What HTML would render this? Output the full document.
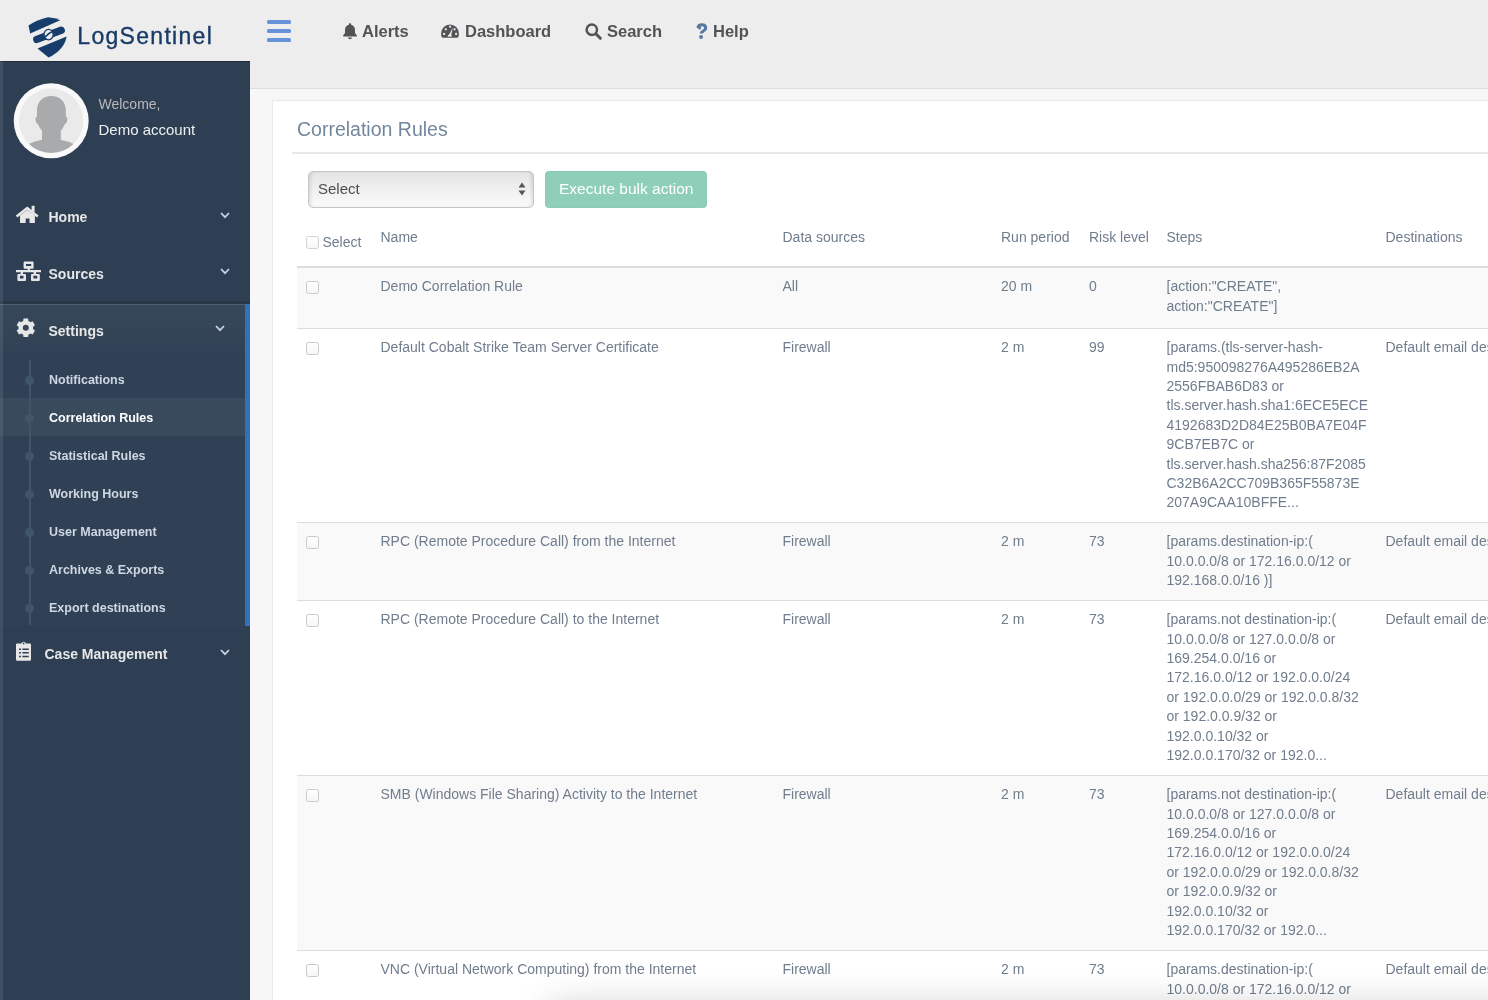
<!DOCTYPE html>
<html><head><meta charset="utf-8"><style>
*{box-sizing:border-box;margin:0;padding:0}
html,body{width:1488px;height:1000px;overflow:hidden}
body{position:relative;background:#F7F7F7;font-family:"Liberation Sans",sans-serif;color:#73879C}
.a{position:absolute}
.t{position:absolute;white-space:nowrap}
.nav{font-weight:bold;font-size:16.5px;color:#515356;line-height:20px}
.menu{font-weight:bold;font-size:14px;color:#E7E7E7;line-height:16px}
.sub{font-weight:bold;font-size:12.5px;color:rgba(255,255,255,.76);line-height:14px}
.cell{position:absolute;font-size:14px;line-height:19.4px;white-space:nowrap;color:#73879C}
.hd{position:absolute;font-size:14px;line-height:16px;white-space:nowrap;color:#73879C}
.hr{position:absolute;left:297px;width:1191px;height:1px;background:#DDDDDD}
.stripe{position:absolute;left:297px;width:1191px;background:#F9F9F9}
.cb{position:absolute;left:306px;width:13px;height:13px;border:1px solid #CACACA;border-radius:2.5px;background:linear-gradient(#FFFFFF,#F6F6F6)}
svg{position:absolute;overflow:visible}
</style></head><body>
<div id="root" style="position:absolute;left:0;top:0;width:1488px;height:1000px;overflow:hidden;will-change:transform">
<div class="a" style="left:0;top:0;width:1488px;height:89px;background:#EDEDED;border-bottom:1px solid #D9DEE4"></div>
<div class="a" style="left:250px;top:89px;width:1238px;height:911px;background:#F7F7F7"></div>
<svg style="left:24px;top:12px" width="48" height="50" viewBox="0 0 48 50">
<path d="M4.5 13.6 Q13 7.5 24 5.2 Q31 5.8 36.2 8.3 L6.2 21.6 Z" fill="#173D6C"/>
<path d="M12.8 27.4 L37.2 18.2" stroke="#173D6C" stroke-width="7.4" stroke-linecap="round"/>
<ellipse cx="24.6" cy="22.6" rx="4.6" ry="5.2" fill="#EDEDED" stroke="#173D6C" stroke-width="1.3"/>
<path d="M20.5 25.5 Q24.5 21 28.5 19.5" stroke="#173D6C" stroke-width="1.6" fill="none"/>
<path d="M13.5 36.6 L42.6 24.4 Q40.5 37.5 24.6 45.6 Z" fill="#173D6C"/>
</svg>
<div class="t " style="left:77.3px;top:22.81px;font-size:23px;line-height:26.45px;color:#173A66;letter-spacing:1.3px;-webkit-text-stroke:0.35px #173A66">LogSentinel</div>
<div class="a" style="left:267px;top:20px;width:24px;height:4px;border-radius:1.5px;background:#6592D8"></div>
<div class="a" style="left:267px;top:29px;width:24px;height:4px;border-radius:1.5px;background:#6592D8"></div>
<div class="a" style="left:267px;top:38px;width:24px;height:4px;border-radius:1.5px;background:#6592D8"></div>
<svg style="left:343px;top:23px" width="14" height="16" viewBox="0 0 14 16">
<path d="M7 0.2c.7 0 1.1.4 1.1 1v.6c2.4.5 3.9 2.5 3.9 4.9v3.3l1.8 2.3v1.2H.2v-1.2L2 10V6.7c0-2.4 1.5-4.4 3.9-4.9v-.6c0-.6.4-1 1.1-1z" fill="#515356"/>
<path d="M5 14.6h4a2 1.6 0 0 1-4 0z" fill="#515356"/></svg>
<div class="t nav" style="left:362px;top:21.80px;font-size:16.5px;line-height:18.974999999999998px;">Alerts</div>
<svg style="left:441px;top:24px" width="18" height="14" viewBox="0 0 18 14">
<path d="M2.3 13.8 Q0.2 13.8 0.2 11.6 L0.2 9.2 A8.8 8.8 0 0 1 17.8 9.2 L17.8 11.6 Q17.8 13.8 15.7 13.8 Z" fill="#515356"/>
<circle cx="3.1" cy="10" r="1.15" fill="#EDEDED"/><circle cx="4.8" cy="5.3" r="1.15" fill="#EDEDED"/>
<circle cx="9.1" cy="2.7" r="1.15" fill="#EDEDED"/><circle cx="13.6" cy="5.3" r="1.15" fill="#EDEDED"/><circle cx="15.1" cy="10" r="1.15" fill="#EDEDED"/>
<path d="M7.2 12.2 L11.9 3.4 L9.9 12.2 Z" fill="#EDEDED"/>
<path d="M6.6 12.6 A2.2 2.2 0 0 1 11 12.6 Z" fill="#EDEDED"/></svg>
<div class="t nav" style="left:465px;top:21.80px;font-size:16.5px;line-height:18.974999999999998px;">Dashboard</div>
<svg style="left:585px;top:23px" width="17" height="17" viewBox="0 0 17 17">
<circle cx="6.8" cy="6.8" r="5.2" fill="none" stroke="#515356" stroke-width="2.5"/>
<path d="M10.8 10.8 L15.3 15.3" stroke="#515356" stroke-width="3" stroke-linecap="round"/></svg>
<div class="t nav" style="left:607px;top:21.80px;font-size:16.5px;line-height:18.974999999999998px;">Search</div>
<svg style="left:696px;top:23px" width="12" height="16" viewBox="0 0 12 16">
<path d="M2.1 5 C2.1 2.6 3.8 1.7 5.9 1.7 C8.1 1.7 9.7 3 9.7 4.9 C9.7 6.8 8.2 7.6 6.8 8.5 C5.7 9.2 5.2 9.9 5.2 10.6" fill="none" stroke="#58779F" stroke-width="3.1" stroke-linecap="butt"/><circle cx="3.6" cy="4.9" r="1.55" fill="#58779F"/>
<circle cx="5.1" cy="14" r="1.95" fill="#58779F"/></svg>
<div class="t nav" style="left:713px;top:21.80px;font-size:16.5px;line-height:18.974999999999998px;">Help</div>
<div class="a" style="left:0;top:61px;width:250px;height:939px;background:#2E3F53"></div>
<div class="a" style="left:0;top:61px;width:250px;height:1px;background:#1F2D3C"></div>
<div class="a" style="left:0;top:304px;width:245px;height:322px;background:#304155"></div>
<div class="a" style="left:0;top:304px;width:245px;height:48px;background:linear-gradient(#37485A,#314256)"></div>
<div class="a" style="left:0;top:301px;width:250px;height:3px;background:rgba(0,0,0,.12)"></div>
<div class="a" style="left:0;top:304px;width:245px;height:1px;background:#4E5F71"></div>
<div class="a" style="left:245px;top:304px;width:5px;height:322px;background:#2F73BD"></div>
<div class="a" style="left:0;top:398px;width:245px;height:38px;background:#3A4A5D"></div>
<svg style="left:13px;top:83px" width="77" height="77" viewBox="13 83 77 77">
<defs><clipPath id="ic"><circle cx="51.2" cy="120.8" r="32.2"/></clipPath></defs>
<circle cx="51.2" cy="120.8" r="37.5" fill="#F9F9F9"/>
<circle cx="51.2" cy="120.8" r="32.2" fill="#EAEAEA"/>
<g clip-path="url(#ic)" fill="#A9AAAC">
<path d="M51.4 96 C60 96 65.8 101.5 65.8 110.5 L65.8 116.5 C67.4 116.8 67.6 118.5 67.2 120.5 C66.8 122.8 65.8 124 64.8 124 C63.8 127 62.2 129.3 60.8 130.5 L60.8 141 L42 141 L42 130.5 C40.6 129.3 39 127 38 124 C37 124 36 122.8 35.6 120.5 C35.2 118.5 35.4 116.8 37 116.5 L37 110.5 C37 101.5 42.8 96 51.4 96 Z"/>
<path d="M18 170 L18 150 Q51.2 127.5 84 150 L84 170 Z"/>
</g></svg>
<div class="t " style="left:98.5px;top:96.10px;font-size:14px;line-height:16.099999999999998px;color:#BAB8B8">Welcome,</div>
<div class="t " style="left:98.5px;top:121.18px;font-size:15px;line-height:17.25px;color:#ECF0F1">Demo account</div>
<svg style="left:14px;top:204px" width="27" height="21" viewBox="14 204 27 21">
<path d="M16.6 216.6 L27.2 208.2 L37.8 216.6" fill="none" stroke="#E7E7E7" stroke-width="2.5"/>
<rect x="31.6" y="205.8" width="3" height="6" fill="#E7E7E7"/>
<path d="M20 215.6 L27.2 210 L34.9 215.6 V223 H29.5 V218.4 H25.7 V223 H20 Z" fill="#E7E7E7"/></svg>
<div class="t menu" style="left:48.5px;top:209.10px;font-size:14px;line-height:16.099999999999998px;">Home</div>
<svg style="left:14px;top:260px" width="29" height="23" viewBox="14 260 29 23">
<path fill="#E7E7E7" fill-rule="evenodd" d="M24.6 261.4 H32.6 Q33.6 261.4 33.6 262.4 V267.8 Q33.6 268.8 32.6 268.8 H24.6 Q23.6 268.8 23.6 267.8 V262.4 Q23.6 261.4 24.6 261.4 Z M26 264 V266 H31.2 V264 Z
M27.6 268.8 H29.9 V270 H27.6 Z
M16 270 H41 V272.2 H16 Z
M20.6 272.2 H23 V274 H20.6 Z M33.6 272.2 H36 V274 H33.6 Z
M18.4 274 H25 Q26 274 26 275 V280 Q26 281 25 281 H18.4 Q17.4 281 17.4 280 V275 Q17.4 274 18.4 274 Z M19.9 275.8 V278.6 H23.5 V275.8 Z
M32 274 H38.8 Q39.8 274 39.8 275 V280 Q39.8 281 38.8 281 H32 Q31 281 31 280 V275 Q31 274 32 274 Z M33.4 275.8 V278.6 H37.3 V275.8 Z"/></svg>
<div class="t menu" style="left:48.5px;top:265.60px;font-size:14px;line-height:16.099999999999998px;">Sources</div>
<svg style="left:219.5px;top:211.6px" width="10" height="7" viewBox="0 0 10 7"><path d="M1 1 L5 5.2 L9 1" fill="none" stroke="#CAD5E3" stroke-width="1.7"/></svg>
<svg style="left:219.5px;top:268.2px" width="10" height="7" viewBox="0 0 10 7"><path d="M1 1 L5 5.2 L9 1" fill="none" stroke="#CAD5E3" stroke-width="1.7"/></svg>
<svg style="left:214.5px;top:325.2px" width="10" height="7" viewBox="0 0 10 7"><path d="M1 1 L5 5.2 L9 1" fill="none" stroke="#CAD5E3" stroke-width="1.7"/></svg>
<svg style="left:219.5px;top:648.5px" width="10" height="7" viewBox="0 0 10 7"><path d="M1 1 L5 5.2 L9 1" fill="none" stroke="#CAD5E3" stroke-width="1.7"/></svg>
<svg style="left:14px;top:316px" width="24" height="24" viewBox="14 316 24 24"><path fill="#E7E7E7" fill-rule="evenodd" d="M28.42 320.98 L28.10 318.58 L23.50 318.58 L23.18 320.98 A7.30 7.30 0 0 0 21.21 322.13 L18.97 321.20 L16.67 325.18 L18.59 326.66 A7.30 7.30 0 0 0 18.59 328.94 L16.67 330.42 L18.97 334.40 L21.21 333.47 A7.30 7.30 0 0 0 23.18 334.62 L23.50 337.02 L28.10 337.02 L28.42 334.62 A7.30 7.30 0 0 0 30.39 333.47 L32.63 334.40 L34.93 330.42 L33.01 328.94 A7.30 7.30 0 0 0 33.01 326.66 L34.93 325.18 L32.63 321.20 L30.39 322.13 A7.30 7.30 0 0 0 28.42 320.98 Z M28.80 327.80 A3.00 3.00 0 1 0 22.80 327.80 A3.00 3.00 0 1 0 28.80 327.80 Z"/></svg>
<div class="t menu" style="left:48.5px;top:322.60px;font-size:14px;line-height:16.099999999999998px;">Settings</div>
<div class="a" style="left:29.2px;top:360px;width:1.5px;height:265px;background:#41556A"></div>
<div class="a" style="left:25px;top:376.0px;width:9px;height:9px;border-radius:50%;background:#41556A"></div>
<div class="t sub" style="left:49px;top:372.98px;font-size:12.5px;line-height:14.374999999999998px;color:#CFD7E2">Notifications</div>
<div class="a" style="left:25px;top:414.0px;width:9px;height:9px;border-radius:50%;background:#41556A"></div>
<div class="t sub" style="left:49px;top:410.98px;font-size:12.5px;line-height:14.374999999999998px;color:#FFFFFF">Correlation Rules</div>
<div class="a" style="left:25px;top:452.0px;width:9px;height:9px;border-radius:50%;background:#41556A"></div>
<div class="t sub" style="left:49px;top:448.98px;font-size:12.5px;line-height:14.374999999999998px;color:#CFD7E2">Statistical Rules</div>
<div class="a" style="left:25px;top:490.0px;width:9px;height:9px;border-radius:50%;background:#41556A"></div>
<div class="t sub" style="left:49px;top:486.98px;font-size:12.5px;line-height:14.374999999999998px;color:#CFD7E2">Working Hours</div>
<div class="a" style="left:25px;top:528.0px;width:9px;height:9px;border-radius:50%;background:#41556A"></div>
<div class="t sub" style="left:49px;top:524.98px;font-size:12.5px;line-height:14.374999999999998px;color:#CFD7E2">User Management</div>
<div class="a" style="left:25px;top:566.0px;width:9px;height:9px;border-radius:50%;background:#41556A"></div>
<div class="t sub" style="left:49px;top:562.98px;font-size:12.5px;line-height:14.374999999999998px;color:#CFD7E2">Archives &amp; Exports</div>
<div class="a" style="left:25px;top:604.0px;width:9px;height:9px;border-radius:50%;background:#41556A"></div>
<div class="t sub" style="left:49px;top:600.98px;font-size:12.5px;line-height:14.374999999999998px;color:#CFD7E2">Export destinations</div>
<svg style="left:14px;top:638px" width="20" height="25" viewBox="14 638 20 25">
<path fill="#E7E7E7" fill-rule="evenodd" d="M17.2 643.4 H21.3 A2.4 2.4 0 0 1 25.9 643.4 H29.8 Q31 643.4 31 644.6 V659.5 Q31 660.7 29.8 660.7 H17.2 Q16 660.7 16 659.5 V644.6 Q16 643.4 17.2 643.4 Z
M23.6 642.5 A0.9 0.9 0 1 0 23.6 644.3 A0.9 0.9 0 1 0 23.6 642.5 Z
M19 648.4 H20.9 V649.9 H19 Z M22.4 648.4 H28.8 V649.9 H22.4 Z
M19 652.1 H20.9 V653.6 H19 Z M22.4 652.1 H28.8 V653.6 H22.4 Z
M19 655.8 H20.9 V657.3 H19 Z M22.4 655.8 H28.8 V657.3 H22.4 Z"/></svg>
<div class="t menu" style="left:44.5px;top:645.60px;font-size:14px;line-height:16.099999999999998px;">Case Management</div>
<div class="a" style="left:272px;top:100px;width:1300px;height:950px;background:#FFFFFF;border:1px solid #E6E9ED"></div>
<div class="t " style="left:297px;top:117.83px;font-size:19.5px;line-height:22.424999999999997px;color:#73879C">Correlation Rules</div>
<div class="a" style="left:292px;top:152px;width:1200px;height:2px;background:#E7E8EA"></div>
<div class="a" style="left:308px;top:171px;width:226px;height:37px;border:1px solid #C6C6C6;border-radius:5px;
background:linear-gradient(#E4E4E4,#F2F2F2 60%,#FAFAFA);box-shadow:inset 3px 0 3px -1px rgba(0,0,0,.09),inset -3px 0 3px -1px rgba(0,0,0,.09)"></div>
<div class="t " style="left:318px;top:180.18px;font-size:15px;line-height:17.25px;color:#4D4D4D">Select</div>
<svg style="left:518px;top:182px" width="8" height="14" viewBox="0 0 8 14"><path d="M4 0.5 L7.5 5.6 H0.5 Z M4 13.5 L7.5 8.4 H0.5 Z" fill="#555"/></svg>
<div class="a" style="left:545px;top:171px;width:162px;height:37px;border-radius:3.5px;background:#8FCFBA;border:1px solid #8ACBB5"></div>
<div class="t " style="left:559px;top:180.42px;font-size:15.5px;line-height:17.825px;color:#FFFFFF">Execute bulk action</div>
<div class="cb" style="top:236px;border-color:#D2D2D2"></div>
<div class="t " style="left:322.5px;top:234.10px;font-size:14px;line-height:16.099999999999998px;color:#707D8D">Select</div>
<div class="t " style="left:380.5px;top:229.10px;font-size:14px;line-height:16.099999999999998px;color:#707D8D">Name</div>
<div class="t " style="left:782.5px;top:229.10px;font-size:14px;line-height:16.099999999999998px;color:#707D8D">Data sources</div>
<div class="t " style="left:1001px;top:229.10px;font-size:14px;line-height:16.099999999999998px;color:#707D8D">Run period</div>
<div class="t " style="left:1089px;top:229.10px;font-size:14px;line-height:16.099999999999998px;color:#707D8D">Risk level</div>
<div class="t " style="left:1166.5px;top:229.10px;font-size:14px;line-height:16.099999999999998px;color:#707D8D">Steps</div>
<div class="t " style="left:1385.5px;top:229.10px;font-size:14px;line-height:16.099999999999998px;color:#707D8D">Destinations</div>
<div class="a" style="left:297px;top:266px;width:1191px;height:2px;background:#DDDDDD"></div>
<div class="stripe" style="top:268px;height:60px"></div>
<div class="cb" style="top:281px"></div>
<div class="t " style="left:380.5px;top:278.10px;font-size:14px;line-height:16.099999999999998px;color:#707D8D">Demo Correlation Rule</div>
<div class="t " style="left:782.5px;top:278.10px;font-size:14px;line-height:16.099999999999998px;color:#707D8D">All</div>
<div class="t " style="left:1001px;top:278.10px;font-size:14px;line-height:16.099999999999998px;color:#707D8D">20 m</div>
<div class="t " style="left:1089px;top:278.10px;font-size:14px;line-height:16.099999999999998px;color:#707D8D">0</div>
<div class="t " style="left:1166.5px;top:278.10px;font-size:14px;line-height:16.099999999999998px;color:#707D8D">[action:"CREATE",</div>
<div class="t " style="left:1166.5px;top:297.50px;font-size:14px;line-height:16.099999999999998px;color:#707D8D">action:"CREATE"]</div>
<div class="hr" style="top:328px"></div>
<div class="cb" style="top:342px"></div>
<div class="t " style="left:380.5px;top:339.10px;font-size:14px;line-height:16.099999999999998px;color:#707D8D">Default Cobalt Strike Team Server Certificate</div>
<div class="t " style="left:782.5px;top:339.10px;font-size:14px;line-height:16.099999999999998px;color:#707D8D">Firewall</div>
<div class="t " style="left:1001px;top:339.10px;font-size:14px;line-height:16.099999999999998px;color:#707D8D">2 m</div>
<div class="t " style="left:1089px;top:339.10px;font-size:14px;line-height:16.099999999999998px;color:#707D8D">99</div>
<div class="t " style="left:1166.5px;top:339.10px;font-size:14px;line-height:16.099999999999998px;color:#707D8D">[params.(tls-server-hash-</div>
<div class="t " style="left:1166.5px;top:358.50px;font-size:14px;line-height:16.099999999999998px;color:#707D8D">md5:950098276A495286EB2A</div>
<div class="t " style="left:1166.5px;top:377.90px;font-size:14px;line-height:16.099999999999998px;color:#707D8D">2556FBAB6D83 or</div>
<div class="t " style="left:1166.5px;top:397.30px;font-size:14px;line-height:16.099999999999998px;color:#707D8D">tls.server.hash.sha1:6ECE5ECE</div>
<div class="t " style="left:1166.5px;top:416.70px;font-size:14px;line-height:16.099999999999998px;color:#707D8D">4192683D2D84E25B0BA7E04F</div>
<div class="t " style="left:1166.5px;top:436.10px;font-size:14px;line-height:16.099999999999998px;color:#707D8D">9CB7EB7C or</div>
<div class="t " style="left:1166.5px;top:455.50px;font-size:14px;line-height:16.099999999999998px;color:#707D8D">tls.server.hash.sha256:87F2085</div>
<div class="t " style="left:1166.5px;top:474.90px;font-size:14px;line-height:16.099999999999998px;color:#707D8D">C32B6A2CC709B365F55873E</div>
<div class="t " style="left:1166.5px;top:494.30px;font-size:14px;line-height:16.099999999999998px;color:#707D8D">207A9CAA10BFFE...</div>
<div class="t " style="left:1385.5px;top:339.10px;font-size:14px;line-height:16.099999999999998px;color:#707D8D">Default email destination</div>
<div class="stripe" style="top:523px;height:77px"></div>
<div class="hr" style="top:522px"></div>
<div class="cb" style="top:536px"></div>
<div class="t " style="left:380.5px;top:533.10px;font-size:14px;line-height:16.099999999999998px;color:#707D8D">RPC (Remote Procedure Call) from the Internet</div>
<div class="t " style="left:782.5px;top:533.10px;font-size:14px;line-height:16.099999999999998px;color:#707D8D">Firewall</div>
<div class="t " style="left:1001px;top:533.10px;font-size:14px;line-height:16.099999999999998px;color:#707D8D">2 m</div>
<div class="t " style="left:1089px;top:533.10px;font-size:14px;line-height:16.099999999999998px;color:#707D8D">73</div>
<div class="t " style="left:1166.5px;top:533.10px;font-size:14px;line-height:16.099999999999998px;color:#707D8D">[params.destination-ip:(</div>
<div class="t " style="left:1166.5px;top:552.50px;font-size:14px;line-height:16.099999999999998px;color:#707D8D">10.0.0.0/8 or 172.16.0.0/12 or</div>
<div class="t " style="left:1166.5px;top:571.90px;font-size:14px;line-height:16.099999999999998px;color:#707D8D">192.168.0.0/16 )]</div>
<div class="t " style="left:1385.5px;top:533.10px;font-size:14px;line-height:16.099999999999998px;color:#707D8D">Default email destination</div>
<div class="hr" style="top:600px"></div>
<div class="cb" style="top:614px"></div>
<div class="t " style="left:380.5px;top:611.10px;font-size:14px;line-height:16.099999999999998px;color:#707D8D">RPC (Remote Procedure Call) to the Internet</div>
<div class="t " style="left:782.5px;top:611.10px;font-size:14px;line-height:16.099999999999998px;color:#707D8D">Firewall</div>
<div class="t " style="left:1001px;top:611.10px;font-size:14px;line-height:16.099999999999998px;color:#707D8D">2 m</div>
<div class="t " style="left:1089px;top:611.10px;font-size:14px;line-height:16.099999999999998px;color:#707D8D">73</div>
<div class="t " style="left:1166.5px;top:611.10px;font-size:14px;line-height:16.099999999999998px;color:#707D8D">[params.not destination-ip:(</div>
<div class="t " style="left:1166.5px;top:630.50px;font-size:14px;line-height:16.099999999999998px;color:#707D8D">10.0.0.0/8 or 127.0.0.0/8 or</div>
<div class="t " style="left:1166.5px;top:649.90px;font-size:14px;line-height:16.099999999999998px;color:#707D8D">169.254.0.0/16 or</div>
<div class="t " style="left:1166.5px;top:669.30px;font-size:14px;line-height:16.099999999999998px;color:#707D8D">172.16.0.0/12 or 192.0.0.0/24</div>
<div class="t " style="left:1166.5px;top:688.70px;font-size:14px;line-height:16.099999999999998px;color:#707D8D">or 192.0.0.0/29 or 192.0.0.8/32</div>
<div class="t " style="left:1166.5px;top:708.10px;font-size:14px;line-height:16.099999999999998px;color:#707D8D">or 192.0.0.9/32 or</div>
<div class="t " style="left:1166.5px;top:727.50px;font-size:14px;line-height:16.099999999999998px;color:#707D8D">192.0.0.10/32 or</div>
<div class="t " style="left:1166.5px;top:746.90px;font-size:14px;line-height:16.099999999999998px;color:#707D8D">192.0.0.170/32 or 192.0...</div>
<div class="t " style="left:1385.5px;top:611.10px;font-size:14px;line-height:16.099999999999998px;color:#707D8D">Default email destination</div>
<div class="stripe" style="top:776px;height:174px"></div>
<div class="hr" style="top:775px"></div>
<div class="cb" style="top:789px"></div>
<div class="t " style="left:380.5px;top:786.10px;font-size:14px;line-height:16.099999999999998px;color:#707D8D">SMB (Windows File Sharing) Activity to the Internet</div>
<div class="t " style="left:782.5px;top:786.10px;font-size:14px;line-height:16.099999999999998px;color:#707D8D">Firewall</div>
<div class="t " style="left:1001px;top:786.10px;font-size:14px;line-height:16.099999999999998px;color:#707D8D">2 m</div>
<div class="t " style="left:1089px;top:786.10px;font-size:14px;line-height:16.099999999999998px;color:#707D8D">73</div>
<div class="t " style="left:1166.5px;top:786.10px;font-size:14px;line-height:16.099999999999998px;color:#707D8D">[params.not destination-ip:(</div>
<div class="t " style="left:1166.5px;top:805.50px;font-size:14px;line-height:16.099999999999998px;color:#707D8D">10.0.0.0/8 or 127.0.0.0/8 or</div>
<div class="t " style="left:1166.5px;top:824.90px;font-size:14px;line-height:16.099999999999998px;color:#707D8D">169.254.0.0/16 or</div>
<div class="t " style="left:1166.5px;top:844.30px;font-size:14px;line-height:16.099999999999998px;color:#707D8D">172.16.0.0/12 or 192.0.0.0/24</div>
<div class="t " style="left:1166.5px;top:863.70px;font-size:14px;line-height:16.099999999999998px;color:#707D8D">or 192.0.0.0/29 or 192.0.0.8/32</div>
<div class="t " style="left:1166.5px;top:883.10px;font-size:14px;line-height:16.099999999999998px;color:#707D8D">or 192.0.0.9/32 or</div>
<div class="t " style="left:1166.5px;top:902.50px;font-size:14px;line-height:16.099999999999998px;color:#707D8D">192.0.0.10/32 or</div>
<div class="t " style="left:1166.5px;top:921.90px;font-size:14px;line-height:16.099999999999998px;color:#707D8D">192.0.0.170/32 or 192.0...</div>
<div class="t " style="left:1385.5px;top:786.10px;font-size:14px;line-height:16.099999999999998px;color:#707D8D">Default email destination</div>
<div class="hr" style="top:950px"></div>
<div class="cb" style="top:964px"></div>
<div class="t " style="left:380.5px;top:961.10px;font-size:14px;line-height:16.099999999999998px;color:#707D8D">VNC (Virtual Network Computing) from the Internet</div>
<div class="t " style="left:782.5px;top:961.10px;font-size:14px;line-height:16.099999999999998px;color:#707D8D">Firewall</div>
<div class="t " style="left:1001px;top:961.10px;font-size:14px;line-height:16.099999999999998px;color:#707D8D">2 m</div>
<div class="t " style="left:1089px;top:961.10px;font-size:14px;line-height:16.099999999999998px;color:#707D8D">73</div>
<div class="t " style="left:1166.5px;top:961.10px;font-size:14px;line-height:16.099999999999998px;color:#707D8D">[params.destination-ip:(</div>
<div class="t " style="left:1166.5px;top:980.50px;font-size:14px;line-height:16.099999999999998px;color:#707D8D">10.0.0.0/8 or 172.16.0.0/12 or</div>
<div class="t " style="left:1166.5px;top:999.90px;font-size:14px;line-height:16.099999999999998px;color:#707D8D">192.168.0.0/16 )]</div>
<div class="t " style="left:1385.5px;top:961.10px;font-size:14px;line-height:16.099999999999998px;color:#707D8D">Default email destination</div>
<div class="a" style="left:540px;top:1002px;width:1200px;height:60px;border-radius:40px;background:rgba(0,0,0,.16);filter:blur(16px)"></div>
<div class="a" style="left:0;top:61px;width:3px;height:939px;background:rgba(255,255,255,.09)"></div>
</div></body></html>
